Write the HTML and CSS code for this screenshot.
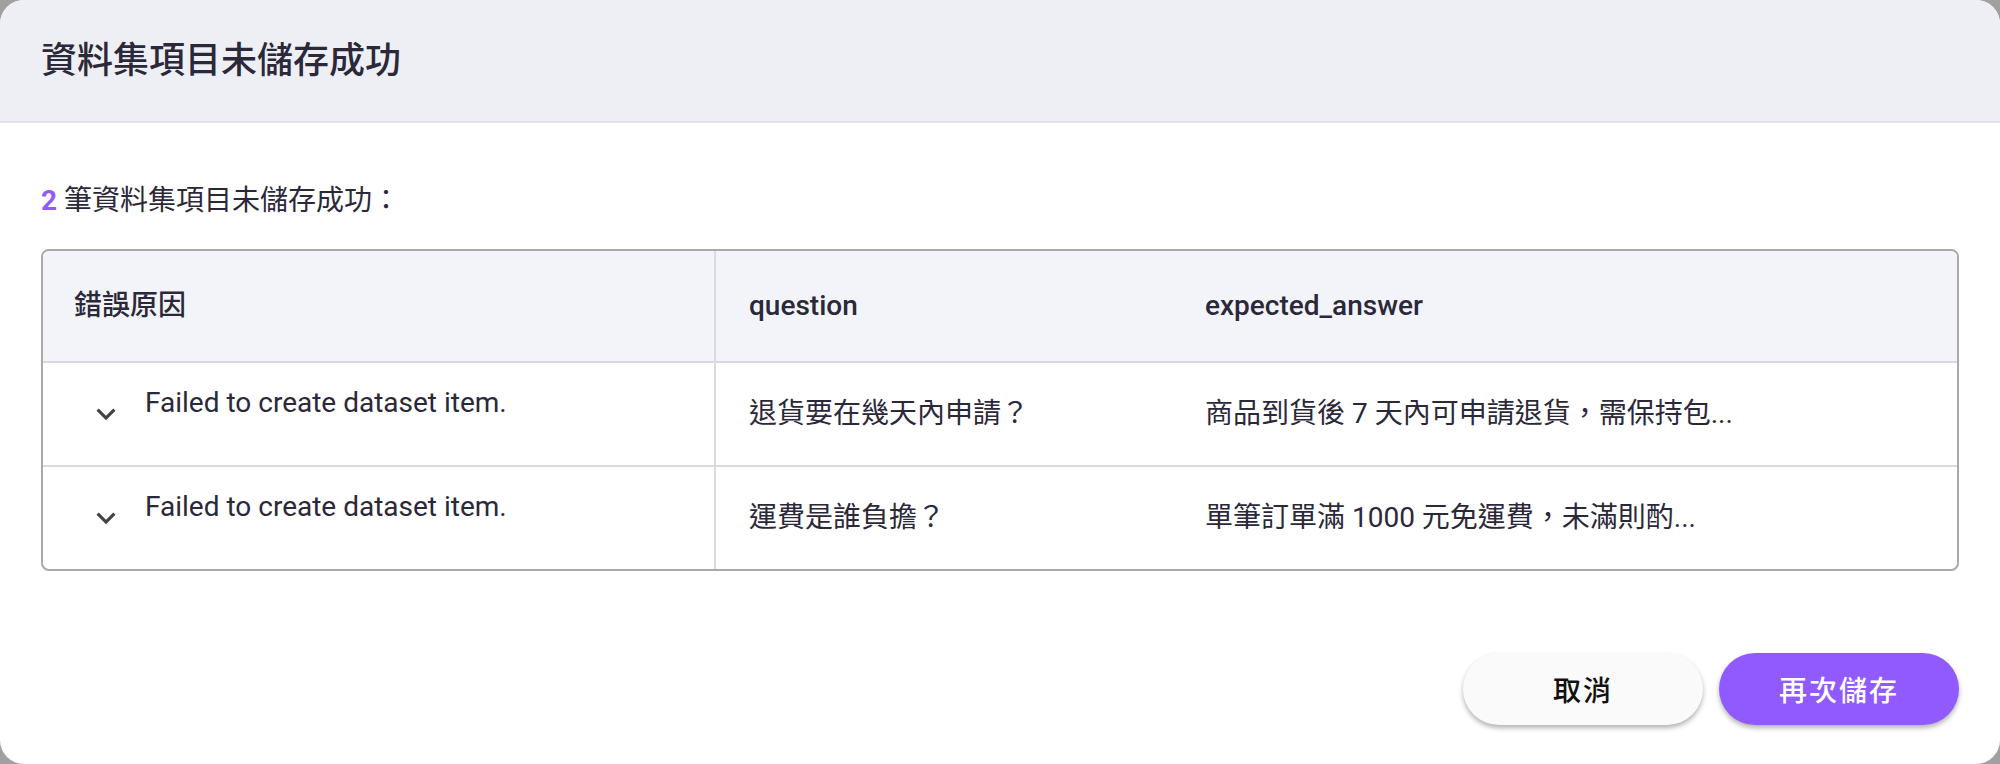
FILE: index.html
```html
<!DOCTYPE html>
<html lang="zh-Hant">
<head>
<meta charset="utf-8">
<title>資料集項目未儲存成功</title>
<link rel="stylesheet" href="styles.css">
</head>
<body>
<div class="dialog">
  <header class="dialog-header">
    <h1 class="title">資料集項目未儲存成功</h1>
  </header>
  <div class="dialog-body">
    <p class="summary"><span class="count">2</span> 筆資料集項目未儲存成功：</p>
    <div class="table">
      <div class="row head">
        <div class="cell c1">錯誤原因</div>
        <div class="cell c2">question</div>
        <div class="cell c3">expected_answer</div>
      </div>
      <div class="row">
        <div class="cell c1 reason-cell">
          <svg class="chev" viewBox="0 0 24 24"><path d="M16.59 8.59L12 13.17 7.41 8.59 6 10l6 6 6-6z"/></svg>
          <span class="reason">Failed to create dataset item.</span>
        </div>
        <div class="cell c2">退貨要在幾天內申請？</div>
        <div class="cell c3">商品到貨後 7 天內可申請退貨，需保持包...</div>
      </div>
      <div class="row">
        <div class="cell c1 reason-cell">
          <svg class="chev" viewBox="0 0 24 24"><path d="M16.59 8.59L12 13.17 7.41 8.59 6 10l6 6 6-6z"/></svg>
          <span class="reason">Failed to create dataset item.</span>
        </div>
        <div class="cell c2">運費是誰負擔？</div>
        <div class="cell c3">單筆訂單滿 1000 元免運費，未滿則酌...</div>
      </div>
    </div>
  </div>
  <footer class="dialog-footer">
    <button class="btn cancel">取消</button>
    <button class="btn primary">再次儲存</button>
  </footer>
</div>
</body>
</html>
```
FILE: styles.css
```css
html, body {
  margin: 0;
  height: 100%;
}
body {
  background: #a0a0a0;
  font-family: Roboto, "Noto Sans CJK TC", sans-serif;
  color: #2b2839;
}
.dialog {
  height: 764px;
  background: #ffffff;
  border-radius: 24px;
  overflow: hidden;
  display: flex;
  flex-direction: column;
}
.dialog-header {
  height: 121px;
  background: #eeeff4;
  border-bottom: 2px solid #e1e1e5;
  display: flex;
  align-items: center;
  padding-left: 41px;
}
.title {
  margin: 0;
  font-size: 36px;
  font-weight: 500;
  line-height: 1;
}
.dialog-body {
  padding: 0 41px;
}
.summary {
  margin: 58px 0 28px;
  height: 40px;
  line-height: 40px;
  font-size: 28px;
}
.count {
  color: #915afe;
  font-weight: 700;
}
.table {
  border: 2px solid #a9a9ac;
  border-radius: 8px;
  overflow: hidden;
}
.row {
  display: grid;
  grid-template-columns: 673px 456px 1fr;
  height: 104px;
  box-sizing: border-box;
  border-bottom: 2px solid #dadade;
}
.row:last-child {
  border-bottom: none;
  height: 102px;
}
.row.head {
  height: 112px;
  background: #f3f4f9;
}
.cell {
  display: flex;
  align-items: center;
  padding-left: 33px;
  font-size: 28px;
  line-height: 40px;
  white-space: nowrap;
  box-sizing: border-box;
}
.c1 {
  padding-left: 31px;
  border-right: 2px solid #dcdce0;
}
.head .cell {
  font-weight: 500;
}
.reason-cell {
  padding-left: 44px;
  gap: 20px;
}
.chev {
  width: 38px;
  height: 38px;
  fill: #444448;
  flex: none;
}
.reason {
  align-self: flex-start;
  margin-top: 20px;
}
.dialog-footer {
  display: flex;
  justify-content: flex-end;
  gap: 16px;
  padding: 82px 41px 0;
}
.btn {
  width: 240px;
  height: 72px;
  border: none;
  border-radius: 36px;
  font-family: inherit;
  font-size: 28px;
  font-weight: 500;
  letter-spacing: 2px;
  box-shadow: 0 3px 5px rgba(0, 0, 0, 0.3);
}
.cancel {
  background: #fafafa;
  color: #111111;
}
.primary {
  background: #915afe;
  color: #ffffff;
}
```
